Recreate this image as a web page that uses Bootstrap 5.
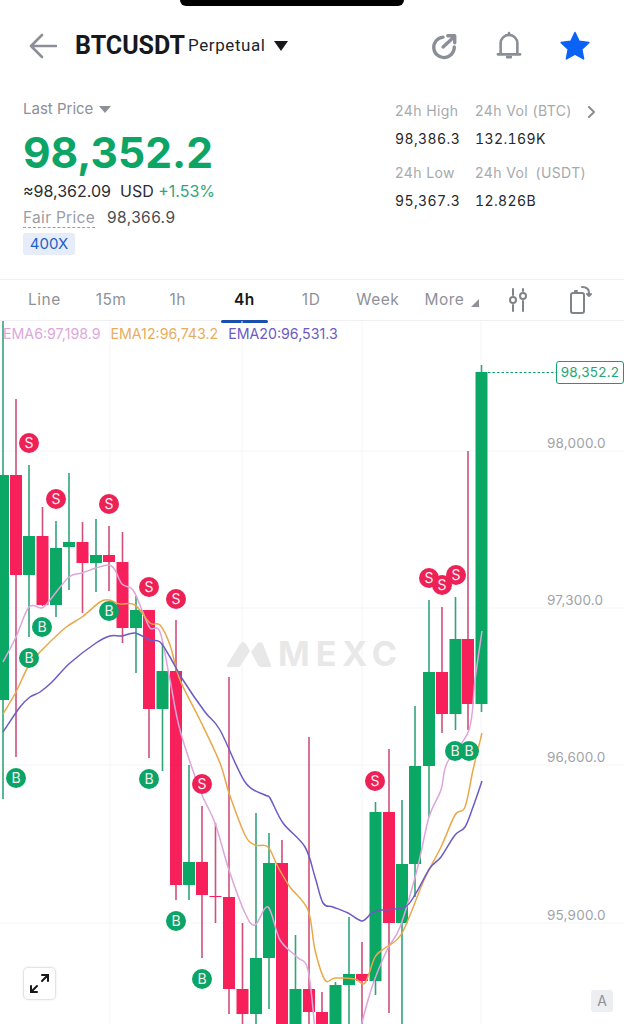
<!DOCTYPE html>
<html lang="en">
<head>
    <meta charset="UTF-8">
    <meta name="viewport" content="width=device-width">
    <link href="https://cdn.jsdelivr.net/npm/bootstrap@5.3.3/dist/css/bootstrap.min.css" rel="stylesheet">
    <title>BTCUSDT Perpetual</title>
    <style>
        body { font-family: Inter, "Liberation Sans", sans-serif; background: #fff; color: #23262b; width: 624px; height: 1024px; overflow: hidden; }
        .notch { top: 0; left: 180px; width: 224px; height: 6px; background: #000; border-radius: 0 0 14px 14px; }
        .top-bar { height: 90px; padding: 2px 34px 0 29px; }
        .pair-name { font-family: Roboto, sans-serif; font-size: 25px; font-weight: 700; color: #16181c; margin-left: 18px; }
        .pair-type { font-family: Roboto, sans-serif; font-size: 17px; letter-spacing: .6px; color: #22252a; margin-left: 3px; }
        .down-tri { width: 0; height: 0; border-left: 7px solid transparent; border-right: 7px solid transparent; border-top: 10px solid #16181c; margin-left: 8px; }
        .top-icons { gap: 38px; }
        .info-box { height: 189px; padding: 10px 23px 0; }
        .lbl-grey { font-size: 15px; color: #8c9097; line-height: 18px; }
        .small-tri { width: 0; height: 0; border-left: 6px solid transparent; border-right: 6px solid transparent; border-top: 7px solid #8c9097; margin-left: 6px; }
        .big-price { font-size: 42.5px; font-weight: 700; color: #0ca566; line-height: 52px; margin-top: 9px; }
        .usd-row { font-size: 16px; line-height: 20px; margin-top: 2px; color: #2b2d31; }
        .pct { color: #2fa57c; }
        .fair-row { font-size: 15.5px; line-height: 20px; margin-top: 7px; color: #4a4d52; letter-spacing: .4px; }
        .fair-lbl { color: #9a9da3; border-bottom: 1px dashed #9a9da3; line-height: 18px; margin-right: 12px; letter-spacing: .3px; }
        .lev-tag { width: 52px; height: 22px; line-height: 22px; margin-top: 5px; background: #e6edf9; color: #1f5fc9; font-size: 15px; text-align: center; border-radius: 3px; }
        .stats-box { width: 206px; margin-top: -3px; font-size: 14px; letter-spacing: .4px; }
        .stats-line { height: 28px; line-height: 28px; }
        .stats-line.gap-top { margin-top: 6px; }
        .stats-a { width: 80px; }
        .stats-lbl { color: #a6a9ae; }
        .stats-val { color: #26282c; letter-spacing: .4px; font-variant-numeric: tabular-nums; }
        .tab-bar { height: 42px; border-top: 1.5px solid #f0f0f2; border-bottom: 1.5px solid #f0f0f2; padding-left: 11px; font-size: 15.5px; color: #8e9298; letter-spacing: .5px; }
        .tab-item { width: 66.7px; text-align: center; position: relative; }
        .tab-item.on { color: #16181c; font-weight: 600; }
        .tab-item.on::after { content: ""; position: absolute; left: 10px; right: 10px; bottom: -11px; height: 3px; background: #1a4fb0; border-radius: 2px; }
        .more-tri { position: absolute; left: 60px; top: 11px; width: 0; height: 0; border-left: 8px solid transparent; border-bottom: 8px solid #8e9298; }
        .tab-icon-a { padding-left: 14px; }
        .tab-icon-b { padding-left: 6px; }
        .chart-area { height: 703px; }
        .chart-area svg { display: block; }
        .ema-row { top: 4px; left: 3px; font-size: 14.2px; gap: 10px; line-height: 18px; }
        .ema-six { color: #dda7dc; }
        .ema-twelve { color: #e8ad5c; }
        .ema-twenty { color: #6c5bc4; }
        .mark-text { font-family: Inter, sans-serif; font-size: 14px; fill: #fdeef2; text-anchor: middle; }
        .price-lbl { left: 547px; font-size: 13.5px; color: #a0a3a9; letter-spacing: .2px; line-height: 16px; }
        .now-tag { left: 556px; top: 40px; width: 68px; height: 23px; line-height: 20px; border: 1.5px solid #0ca566; border-radius: 3px; background: #fff; color: #23a679; font-size: 13.5px; text-align: center; letter-spacing: .2px; }
        .water { left: 227px; top: 318px; gap: 7px; color: #e8e8e9; }
        .water span { font-size: 34px; font-weight: 700; letter-spacing: 6px; line-height: 30px; }
        .expand-btn { left: 23px; top: 646px; width: 33px; height: 33px; background: #fff; border: 1px solid #e4e4e6; border-radius: 5px; box-shadow: 0 0 3px rgba(0,0,0,.08); }
        .auto-btn { left: 591px; top: 669px; width: 22px; height: 22px; background: #eceef1; border-radius: 3px; color: #8d9198; font-size: 14px; line-height: 22px; text-align: center; }
    </style>
</head>
<body class="position-relative">
    <div class="notch position-absolute"></div>

    <div class="top-bar d-flex align-items-center">
        <svg width="28" height="26" viewBox="0 0 28 26" fill="none" stroke="#8a8f98" stroke-width="2.6" stroke-linecap="round" stroke-linejoin="round"><path d="M27 13H2M13 2 2 13l11 11"/></svg>
        <span class="pair-name">BTCUSDT</span>
        <span class="pair-type">Perpetual</span>
        <span class="down-tri"></span>
        <div class="top-icons d-flex align-items-center ms-auto">
            <svg width="28" height="28" viewBox="0 0 30 30" fill="none" stroke="#8a8e96" stroke-width="3.6" stroke-linecap="round" stroke-linejoin="round"><path d="M14 5.5A11 11 0 1 0 26 16"/><path d="M14 16 26 5M19 4h7.5v7.5"/></svg>
            <svg width="26" height="30" viewBox="0 0 28 30" fill="none" stroke="#8a8e96" stroke-width="2.8" stroke-linecap="round" stroke-linejoin="round"><path d="M5 23V12a9 9 0 0 1 18 0v11M2 24h24"/><path d="M14 1v2M12 27h4"/></svg>
            <svg width="30" height="30" viewBox="0 0 30 30"><path d="M15 1.5l4.2 8.8 9.6 1.3-7 6.7 1.8 9.6L15 23.2l-8.6 4.7 1.8-9.6-7-6.7 9.6-1.3z" fill="#0b63f6" stroke="#0b63f6" stroke-width="1.5" stroke-linejoin="round"/></svg>
        </div>
    </div>

    <div class="info-box d-flex justify-content-between">
        <div>
            <div class="lbl-grey d-flex align-items-center">Last Price <span class="small-tri"></span></div>
            <div class="big-price">98,352.2</div>
            <div class="usd-row">≈98,362.09&nbsp; USD <span class="pct">+1.53%</span></div>
            <div class="fair-row d-flex align-items-center"><span class="fair-lbl">Fair Price</span>98,366.9</div>
            <div class="lev-tag">400X</div>
        </div>
        <div class="stats-box">
            <div class="stats-line d-flex position-relative">
                <span class="stats-a stats-lbl">24h High</span><span class="stats-lbl">24h Vol (BTC)</span>
                <svg class="position-absolute" style="left:192px;top:9px" width="10" height="12" viewBox="0 0 10 12" fill="none" stroke="#8a8e96" stroke-width="2" stroke-linecap="round" stroke-linejoin="round"><path d="M2 1l5 5-5 5"/></svg>
            </div>
            <div class="stats-line d-flex"><span class="stats-a stats-val">98,386.3</span><span class="stats-val">132.169K</span></div>
            <div class="stats-line gap-top d-flex"><span class="stats-a stats-lbl">24h Low</span><span class="stats-lbl">24h Vol&thinsp; (USDT)</span></div>
            <div class="stats-line d-flex"><span class="stats-a stats-val">95,367.3</span><span class="stats-val">12.826B</span></div>
        </div>
    </div>

    <div class="tab-bar d-flex align-items-center">
        <div class="tab-item">Line</div>
        <div class="tab-item">15m</div>
        <div class="tab-item">1h</div>
        <div class="tab-item on">4h</div>
        <div class="tab-item">1D</div>
        <div class="tab-item">Week</div>
        <div class="tab-item">More<span class="more-tri"></span></div>
        <div class="tab-item tab-icon-a">
            <svg width="20" height="24" viewBox="0 0 20 24" fill="none" stroke="#7f838a" stroke-width="2" stroke-linecap="round"><path d="M5 1v6M15 1v2M5 17v6M15 13v10"/><circle cx="5" cy="12" r="3"/><circle cx="15" cy="8" r="3"/></svg>
        </div>
        <div class="tab-item tab-icon-b">
            <svg width="22" height="28" viewBox="0 0 22 28" fill="none" stroke="#7f838a" stroke-width="2" stroke-linecap="round" stroke-linejoin="round"><rect x="1" y="7" width="13" height="20" rx="2"/><path d="M5 7V5h2M12 1c4 0 7 2 7 6v3M17 8l2 2 2-2"/></svg>
        </div>
    </div>

    <div class="chart-area position-relative">
        <div class="water position-absolute d-flex align-items-center">
            <svg width="44" height="26" viewBox="0 0 44 26" fill="#e8e8e9"><path d="M0 24 13 3q3-4 6 0l4 7-9 14q-1 2-3 2H2q-3 0-2-2zM24 11l6-8q3-4 6 0l8 21q1 2-2 2h-8q-2 0-3-2z"/></svg>
            <span>MEXC</span>
        </div>
        <svg id="chart" width="624" height="703" viewBox="0 321 624 703"></svg>
        <div class="ema-row position-absolute d-flex">
            <span class="ema-six">EMA6:97,198.9</span>
            <span class="ema-twelve">EMA12:96,743.2</span>
            <span class="ema-twenty">EMA20:96,531.3</span>
        </div>
        <div class="now-tag position-absolute">98,352.2</div>
        <div class="price-lbl position-absolute" style="top:114px">98,000.0</div>
        <div class="price-lbl position-absolute" style="top:271px">97,300.0</div>
        <div class="price-lbl position-absolute" style="top:428px">96,600.0</div>
        <div class="price-lbl position-absolute" style="top:586px">95,900.0</div>
        <div class="expand-btn position-absolute d-flex align-items-center justify-content-center">
            <svg width="21" height="21" viewBox="0 0 21 21" fill="none" stroke="#16181c" stroke-width="2" stroke-linecap="round"><path d="M13 8l6-6M13 2h6v6M8 13l-6 6M2 13v6h6"/></svg>
        </div>
        <div class="auto-btn position-absolute">A</div>
    </div>

<script>
    // x, wick top, wick bottom, body top, body bottom, colour
    const candles = [
        [3,321,799,475,700,'g'],[16,399,757,475,575,'r'],[29,465,637,536,575,'g'],[42.5,507,606,536,605,'r'],
        [56,521,617,548,605,'g'],[69,473,590,542,547,'g'],[82.5,522,613,542,563,'r'],[96,519,592,555,563,'g'],
        [109,526,591,555,562,'r'],[122.5,532,643,562,628,'r'],[136,596,673,610,628,'g'],[149,610,758,610,709,'r'],
        [162.5,643,771,671,709,'g'],[176,620,900,671,885,'r'],[189,765,900,862,885,'g'],[202,806,958,862,895,'r'],
        [215.5,823,923,896,897,'r'],[229,677,1014,897,989,'r'],[242.5,923,1024,989,1014,'r'],[256,813,1024,958,1014,'g'],
        [269,833,1009,863,958,'g'],[282,840,1024,863,1030,'r'],[295.5,935,1024,989,1030,'g'],[309,737,1024,989,1012,'r'],
        [322,992,1024,1012,1030,'r'],[335.5,982,1024,985,1030,'g'],[349,917,1024,974,985,'g'],[362,942,1024,974,981,'r'],
        [375.5,802,995,812,981,'g'],[389,749,1013,812,923,'r'],[402,800,1024,864,923,'g'],[415,706,897,766,864,'g'],
        [429,600,817,672,766,'g'],[442,607,733,672,714,'r'],[455.5,597,730,639,714,'g'],[468,451,730,639,704,'r'],
        [481.5,365,712,372,704,'g']
    ]
    const ema6 = [[3,662],[16,637],[29,607],[42,608],[50,600],[69,577],[82,573],[96,568],[109,565],[115,570],[122,584],[133,590],[142,610],[150,628],[160,632],[170,680],[180,730],[200,790],[215,823],[229,870],[245,913],[255,925],[268,907],[280,940],[297,957],[308,970],[315,1030]]
    const ema6b = [[360,1030],[372,987],[387,950],[400,927],[417,870],[429,817],[441,790],[447,763],[469,730],[475,680],[482,631]]
    const ema12 = [[3,714],[16,692],[29,665],[42,650],[65,628],[82,617],[100,602],[109,600],[120,604],[135,605],[150,623],[160,625],[170,645],[180,680],[200,720],[220,763],[229,793],[245,835],[255,845],[268,847],[278,867],[290,887],[308,910],[315,950],[325,980],[335,978],[355,979],[365,983],[375,957],[385,948],[402,933],[424,880],[441,847],[455,815],[465,807],[473,770],[482,733]]
    const ema20 = [[3,732],[20,707],[30,697],[40,692],[52,682],[70,663],[96,643],[110,636],[122,636],[135,633],[150,640],[160,642],[170,657],[183,680],[205,712],[220,730],[245,782],[265,795],[270,798],[283,823],[305,847],[315,877],[323,903],[333,907],[348,913],[362,921],[372,913],[382,910],[405,907],[416,893],[430,868],[441,857],[455,835],[465,827],[473,807],[482,781]]
    const sells = [[29,443],[56,499],[109,504],[149,587],[176,599],[202,784],[375,781],[429,578],[456,575],[442,585]]
    const buys = [[42,627],[29,658],[109,611],[16,778],[149,779],[176,921],[202,979],[455,751],[469,751]]

    function smoothPath(pts) {
        let d = `M${pts[0][0]} ${pts[0][1]}`
        for (let i = 0; i < pts.length - 1; i++) {
            const p0 = pts[i - 1] || pts[i], p1 = pts[i], p2 = pts[i + 1], p3 = pts[i + 2] || p2
            d += `C${p1[0] + (p2[0] - p0[0]) / 6} ${p1[1] + (p2[1] - p0[1]) / 6} ${p2[0] - (p3[0] - p1[0]) / 6} ${p2[1] - (p3[1] - p1[1]) / 6} ${p2[0]} ${p2[1]}`
        }
        return d
    }

    let out = ''
    // grid
    ;[451, 608, 765, 923].forEach(y => out += `<line x1="0" x2="624" y1="${y}" y2="${y}" stroke="#f5f5f6" stroke-width="1"/>`)
    ;[110, 242, 362, 481].forEach(x => out += `<line x1="${x}" x2="${x}" y1="321" y2="1024" stroke="#f5f5f6" stroke-width="1"/>`)
    out += `<line x1="488" x2="556" y1="372.5" y2="372.5" stroke="#0ca566" stroke-width="1.2" stroke-dasharray="2.5 2"/>`
    candles.forEach(c => {
        const wick = c[5] == 'g' ? '#33a47a' : '#cf5079'
        const fill = c[5] == 'g' ? '#0ba764' : '#f8205a'
        out += `<line x1="${c[0]}" x2="${c[0]}" y1="${c[1]}" y2="${c[2]}" stroke="${wick}" stroke-width="1.6"/>`
        out += `<rect x="${c[0] - 6}" y="${c[3]}" width="12" height="${Math.max(c[4] - c[3], 1)}" fill="${fill}"/>`
    })
    out += `<path d="${smoothPath(ema6)}" fill="none" stroke="#dca6dc" stroke-width="1.5"/>`
    out += `<path d="${smoothPath(ema6b)}" fill="none" stroke="#dca6dc" stroke-width="1.5"/>`
    out += `<path d="${smoothPath(ema12)}" fill="none" stroke="#e9a84a" stroke-width="1.5"/>`
    out += `<path d="${smoothPath(ema20)}" fill="none" stroke="#6c5bc4" stroke-width="1.5"/>`
    sells.forEach(m => out += `<circle cx="${m[0]}" cy="${m[1]}" r="10" fill="#ee2157"/><text class="mark-text" x="${m[0]}" y="${m[1] + 5}">S</text>`)
    buys.forEach(m => out += `<circle cx="${m[0]}" cy="${m[1]}" r="10" fill="#0aa566"/><text class="mark-text" x="${m[0]}" y="${m[1] + 5}">B</text>`)
    document.getElementById('chart').innerHTML = out
</script>
<script src="https://cdn.jsdelivr.net/npm/bootstrap@5.3.3/dist/js/bootstrap.bundle.min.js"></script>
</body>
</html>
